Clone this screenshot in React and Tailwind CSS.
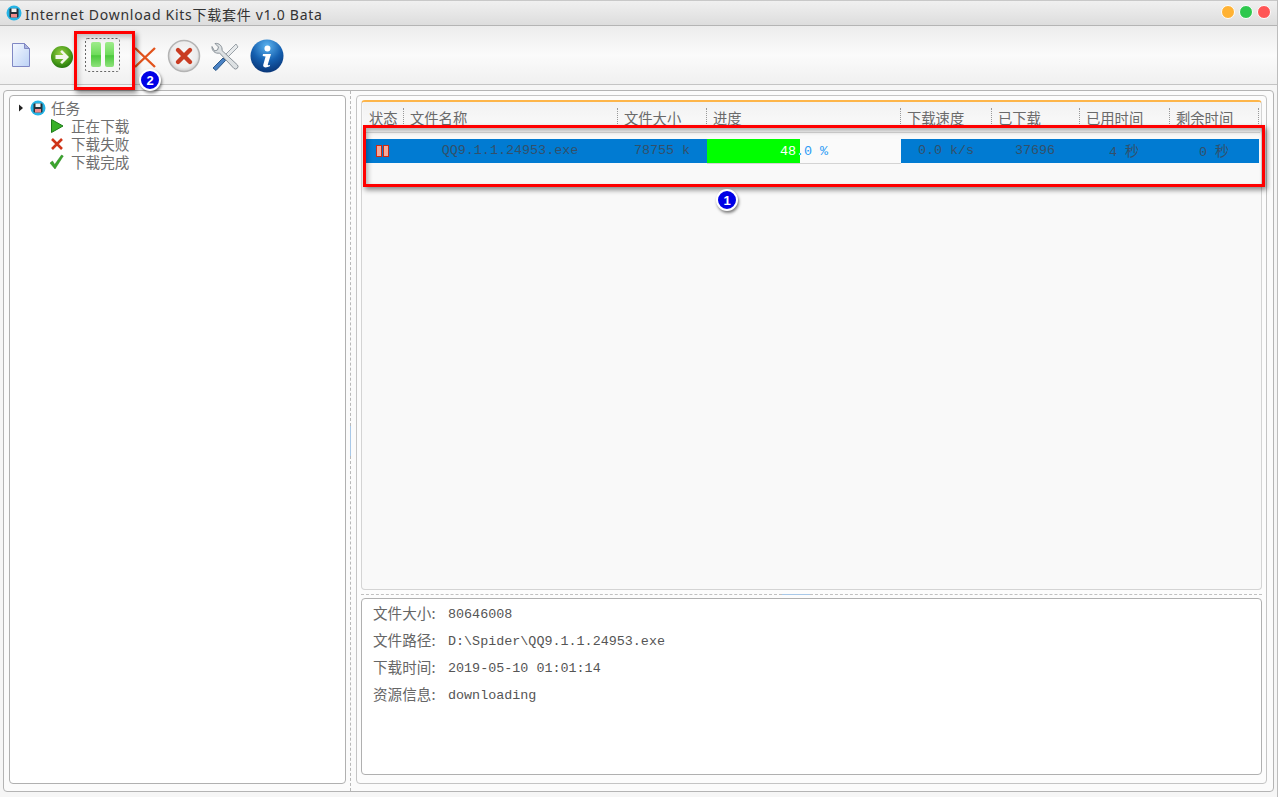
const CJK = "font-['Noto_Sans_CJK_SC',sans-serif]";
const MONO = "font-['Liberation_Mono','Noto_Sans_CJK_SC',monospace]";

const columns = [
  { title: "状态" },
  { title: "文件名称" },
  { title: "文件大小" },
  { title: "进度" },
  { title: "下载速度" },
  { title: "已下载" },
  { title: "已用时间" },
  { title: "剩余时间" },
];

const details = [
  ["文件大小:", "80646008"],
  ["文件路径:", "D:\\Spider\\QQ9.1.1.24953.exe"],
  ["下载时间:", "2019-05-10 01:01:14"],
  ["资源信息:", "downloading"],
];

const DiskIcon = ({ size = 16 }) => (
  <svg width={size} height={size} viewBox="0 0 16 16">
    <circle cx="8" cy="8" r="7.5" fill="#25b4e6" />
    <rect x="3.5" y="3.5" width="9" height="9" rx="1" fill="#26323c" />
    <rect x="5.5" y="3.5" width="5" height="3.5" fill="#f4f4f4" />
    <rect x="5" y="9" width="6" height="3.5" fill="#f08a8a" />
  </svg>
);

const FileIcon = () => (
  <svg width="22" height="26" viewBox="0 0 22 26">
    <defs>
      <linearGradient id="fileFill" x1="0" y1="0" x2="1" y2="1">
        <stop offset="0" stopColor="#f4f8ff" />
        <stop offset="1" stopColor="#bcd2f5" />
      </linearGradient>
    </defs>
    <path d="M2.5 1.5h12l5 5v18h-17z" fill="url(#fileFill)" stroke="#8088c4" />
    <path d="M14.5 1.5v5h5z" fill="#aab4dc" stroke="#8088c4" />
  </svg>
);

const ArrowIcon = () => (
  <svg width="24" height="24" viewBox="0 0 24 24">
    <defs>
      <radialGradient id="arrowFill" cx="0.45" cy="0.35" r="0.75">
        <stop offset="0" stopColor="#9ad044" />
        <stop offset="0.6" stopColor="#469a18" />
        <stop offset="1" stopColor="#17650a" />
      </radialGradient>
    </defs>
    <circle cx="12" cy="12" r="11" fill="url(#arrowFill)" />
    <path d="M12 5l7 7-7 7-1.8-1.8 3.2-3.2H5.5v-4h7.9l-3.2-3.2z" fill="#f3f7ea" />
  </svg>
);

const PauseIcon = () => (
  <svg width="35" height="34" viewBox="0 0 35 34">
    <defs>
      <linearGradient id="pauseFill" x1="0" y1="0" x2="0" y2="1">
        <stop offset="0" stopColor="#9fec8c" />
        <stop offset="0.5" stopColor="#6fdc5c" />
        <stop offset="0.55" stopColor="#4cc93d" />
        <stop offset="1" stopColor="#8fe27c" />
      </linearGradient>
    </defs>
    <rect x="0.5" y="0.5" width="34" height="33" rx="2" fill="none" stroke="#666" strokeDasharray="2 2" />
    <rect x="6" y="4" width="10" height="25" rx="2" fill="url(#pauseFill)" />
    <rect x="20" y="4" width="9" height="25" rx="2" fill="url(#pauseFill)" />
  </svg>
);

const CrossIcon = () => (
  <svg width="24" height="24" viewBox="0 0 24 24">
    <path d="M2 2l20 19M22 2L2 21" stroke="#e2531c" strokeWidth="2.4" fill="none" />
  </svg>
);

const CancelIcon = () => (
  <svg width="34" height="34" viewBox="0 0 34 34">
    <defs>
      <radialGradient id="cancelFill" cx="0.5" cy="0.45" r="0.6">
        <stop offset="0" stopColor="#fbfbfb" />
        <stop offset="0.7" stopColor="#ececec" />
        <stop offset="1" stopColor="#bcbcbc" />
      </radialGradient>
    </defs>
    <circle cx="17" cy="17" r="15.5" fill="url(#cancelFill)" stroke="#b4b4b4" strokeWidth="1.5" />
    <path d="M11 11l12 12M23 11l-12 12" stroke="#c93c22" strokeWidth="4.4" strokeLinecap="round" />
  </svg>
);

const ToolsIcon = () => (
  <svg width="32" height="32" viewBox="0 0 32 32">
    <path d="M27 3L15 15l2.5 2.5L29 6z" fill="#e6e9eb" stroke="#9aa2a8" />
    <path d="M4 27l10-10 2.5 2.5-9.5 10z" fill="#4a82c4" stroke="#2c5888" />
    <path d="M3 5.5a6 6 0 0 0 7.5 6.5L25 27.5a2.5 2.5 0 0 0 3.5-3.5L13 9.5A6 6 0 0 0 6 2.5l3.5 3.5-1 3-3 1z" fill="#dde1e3" stroke="#8a9299" />
  </svg>
);

const InfoIcon = () => (
  <svg width="34" height="34" viewBox="0 0 34 34">
    <defs>
      <radialGradient id="infoFill" cx="0.5" cy="0.2" r="0.9">
        <stop offset="0" stopColor="#5cb4f0" />
        <stop offset="0.5" stopColor="#1560b0" />
        <stop offset="1" stopColor="#062a68" />
      </radialGradient>
    </defs>
    <circle cx="17" cy="17" r="16.5" fill="url(#infoFill)" />
    <path d="M17.5 6.5a3 3 0 1 1-.1 6 3 3 0 0 1 .1-6zM13 15h8l-3.2 10.5c-.2.8.4 1 2.4.2l-.4 1.6c-3 1.7-7.2 1.7-6.6-1.3l2.4-8.6-2.9-.4z" fill="#fff" />
  </svg>
);

const PlayMini = () => (
  <svg width="14" height="16" viewBox="0 0 14 16">
    <path d="M1.5 1.5L13 8 1.5 14.5z" fill="#38b028" stroke="#1c7a18" />
  </svg>
);

const CrossMini = () => (
  <svg width="14" height="14" viewBox="0 0 14 14">
    <path d="M2 2l10 10M12 2L2 12" stroke="#cf3418" strokeWidth="2.6" />
  </svg>
);

const CheckMini = () => (
  <svg width="15" height="16" viewBox="0 0 15 16">
    <path d="M1 9l2.5-2 2.2 3.5L12.5 1l1.8 1L6 15z" fill="#3aa62c" stroke="#27801f" strokeWidth="0.5" />
  </svg>
);

const TreeItem = ({ icon, label }) => (
  <div className="flex h-[18px] items-center">
    <span className="flex w-[23px] justify-center pr-[6px]">{icon}</span>
    <span>{label}</span>
  </div>
);

const Badge = ({ n, className }) => (
  <div
    className={`absolute flex h-[22px] w-[22px] items-center justify-center rounded-full border-[2px] border-white bg-[#0000e6] text-[13px] font-bold leading-none text-white shadow-[1px_2px_3px_rgba(0,0,0,0.5)] font-['Liberation_Sans',sans-serif] ${className}`}
  >
    {n}
  </div>
);

export default function App() {
  return (
    <div className="relative flex h-[797px] w-[1278px] flex-col overflow-hidden border-r border-[#bdbdbd] bg-[#f6f6f6] text-[#666]">
      {/* title bar */}
      <div className="flex h-[26px] shrink-0 items-center border-y border-b-[#b4b4b4] border-t-[#c8c8c8] bg-gradient-to-b from-[#f0f0f0] to-[#dddddd] pl-[6px]">
        <DiskIcon />
        <span className="ml-[3px] mt-[2px] text-[14px] tracking-[0.72px] text-[#333] font-['Noto_Sans','Noto_Sans_CJK_SC',sans-serif]">
          Internet Download Kits下载套件 v1.0 Bata
        </span>
        <div className="mb-[2px] ml-auto mr-[6px] flex gap-[4px]">
          <span className="h-[14px] w-[14px] rounded-full border border-white bg-[#ffb233]" />
          <span className="h-[14px] w-[14px] rounded-full border border-white bg-[#2dc84d]" />
          <span className="h-[14px] w-[14px] rounded-full border border-white bg-[#ff5555]" />
        </div>
      </div>

      {/* toolbar */}
      <div className="flex h-[59px] shrink-0 items-center border-b border-[#c4c4c4] bg-gradient-to-b from-[#ececec] via-[#fbfbfb] to-[#f0f0f0] pl-[10px]">
        <FileIcon />
        <span className="ml-[18px] mt-[4px]"><ArrowIcon /></span>
        <span className="ml-[11px] mt-[-1px]"><PauseIcon /></span>
        <span className="ml-[13px] mt-[6px]"><CrossIcon /></span>
        <span className="ml-[10px] mt-[1px]"><CancelIcon /></span>
        <span className="ml-[8px] mt-[3px]"><ToolsIcon /></span>
        <span className="ml-[9px] mt-[1px]"><InfoIcon /></span>
      </div>

      {/* main */}
      <div className="flex min-h-0 flex-1 flex-col px-[3px] pt-[5px]">
        <div className="flex h-[702px] rounded-[4px] border border-[#b4b4b4] bg-[#fbfbfb]">
          {/* task tree */}
          <div className="w-[342px] shrink-0 pb-[7px] pl-[5px] pt-[4px]">
            <div className={`h-full rounded-[4px] border border-[#b0b0b0] bg-white pl-[6px] pt-[3px] text-[14.6px] leading-[18px] text-[#6e6e6e] ${CJK}`}>
              <div className="flex h-[18px] items-center">
                <svg width="10" height="10" viewBox="0 0 10 10">
                  <path d="M3 1.5L7 5 3 8.5z" fill="#222" />
                </svg>
                <span className="ml-[4px]"><DiskIcon /></span>
                <span className="ml-[5px]">任务</span>
              </div>
              <div className="ml-[32px]">
                <TreeItem icon={<PlayMini />} label="正在下载" />
                <TreeItem icon={<CrossMini />} label="下载失败" />
                <TreeItem icon={<CheckMini />} label="下载完成" />
              </div>
            </div>
          </div>

          {/* vertical splitter */}
          <div className="flex w-[10px] shrink-0 flex-col pl-[4px]">
            <div className="flex-1 border-l border-dashed border-[#b8b8b8]" />
            <div className="h-[30px] border-l border-[#a8c8e8]" />
            <div className="flex-1 border-l border-dashed border-[#b8b8b8]" />
          </div>

          {/* right panel */}
          <div className="flex-1 pb-[7px] pr-[6px] pt-[4px]">
            <div className="flex h-full flex-col rounded-[4px] border border-[#c4c4c4] bg-[#fcfcfc] px-[4px] pt-[4px]">
              {/* table */}
              <div className="h-[490px] shrink-0 rounded-[4px] border-x border-b border-t-2 border-x-[#d4d4d4] border-b-[#d4d4d4] border-t-[#fdb54a] bg-[#f9f9f9] px-[1px]">
                <div className={`grid h-[31px] grid-cols-[40px_214px_89px_194px_91px_88px_90px_89px_1fr] border-b border-[#d8d8d8] bg-gradient-to-b from-[#f2f2f2] to-[#fbfbfb] pt-[6px] text-[14.3px] leading-[20px] text-[#6a6a6a] ${CJK}`}>
                  {columns.map((c, i) => (
                    <div
                      key={c.title}
                      className={`h-[18px] pl-[6px] ${i > 0 ? "border-l border-dotted border-[#999]" : ""}`}
                    >
                      {c.title}
                    </div>
                  ))}
                  <div className="h-[18px] border-l border-dotted border-[#999]" />
                </div>

                {/* row */}
                <div className={`mt-[6px] grid h-[24px] w-[896px] grid-cols-[40px_214px_90px_194px_90px_88px_90px_90px] grid-rows-[24px] items-center bg-[#017bd2] text-center text-[13.4px] leading-[26px] text-[#33506a] ${MONO}`}>
                  <div className="flex justify-center gap-[1px] pr-[1px]">
                    <span className="h-[12px] w-[6px] border border-[#cc2a14] bg-[#f5a99a]" />
                    <span className="h-[12px] w-[6px] border border-[#cc2a14] bg-[#f5a99a]" />
                  </div>
                  <div>QQ9.1.1.24953.exe</div>
                  <div>78755 k</div>
                  <div className="relative h-[24px] bg-[#fafafa] text-[#2d9cf5]">
                    <span className="block w-[194px]">48.0 %</span>
                    <div className="absolute left-0 top-0 h-[24px] w-[93px] overflow-hidden bg-[#00ff00] text-white">
                      <span className="block w-[194px]">48.0 %</span>
                    </div>
                  </div>
                  <div>0.0 k/s</div>
                  <div>37696</div>
                  <div>4 <span className={`text-[14px] ${CJK}`}>秒</span></div>
                  <div>0 <span className={`text-[14px] ${CJK}`}>秒</span></div>
                </div>
                <div className="ml-[344px] w-[194px] border-t border-[#d4d4d4]" />
              </div>

              {/* horizontal splitter */}
              <div className="flex h-[8px] shrink-0 items-center">
                <div className="w-[421px] border-t border-dashed border-[#c0c0c0]" />
                <div className="w-[28px] border-t border-[#a8c8e8]" />
                <div className="flex-1 border-t border-dashed border-[#c0c0c0]" />
              </div>

              {/* details */}
              <div className="h-[177px] shrink-0 rounded-[4px] border border-[#b0b0b0] bg-white pl-[11px] pt-[2px] text-[#555]">
                {details.map(([label, value]) => (
                  <div key={label} className="flex h-[27px] items-center">
                    <span className={`mt-[-3px] w-[75px] text-[14.6px] text-[#666] ${CJK}`}>{label}</span>
                    <span className={`mt-[1px] text-[13.4px] ${MONO}`}>{value}</span>
                  </div>
                ))}
              </div>
            </div>
          </div>
        </div>
      </div>

      {/* red annotations over the screenshot */}
      <div className="absolute left-[363px] top-[125px] h-[62px] w-[902px] border-[3px] border-[#ff0000] shadow-[2px_3px_5px_rgba(0,0,0,0.45),inset_2px_3px_5px_rgba(0,0,0,0.3)]" />
      <div className="absolute left-[74px] top-[31px] h-[59px] w-[61px] border-[3px] border-[#ff0000] shadow-[2px_3px_5px_rgba(0,0,0,0.45),inset_2px_3px_5px_rgba(0,0,0,0.2)]" />
      <Badge n="1" className="left-[716px] top-[189px]" />
      <Badge n="2" className="left-[139px] top-[69px]" />
    </div>
  );
}
